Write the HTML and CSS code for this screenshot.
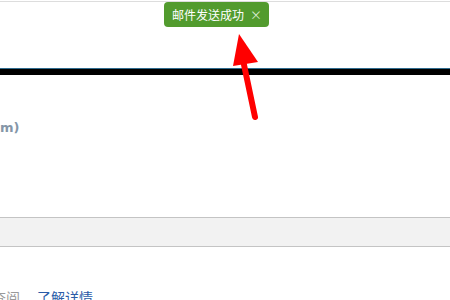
FILE: index.html
```html
<!DOCTYPE html>
<html>
<head>
<meta charset="utf-8">
<link rel="stylesheet" href="styles.css">
</head>
<body>
<div class="page">
  <div class="topline"></div>
  <div class="rule"></div>
  <div class="info">m)</div>
  <div class="band"></div>
  <div class="links"><span class="muted">查阅</span><a class="more">了解详情</a></div>

  <div class="toast"><span class="toast-text">邮件发送成功</span><span class="toast-close">×</span></div>
  <svg class="arrow" width="450" height="300" viewBox="0 0 450 300">
    <line x1="255" y1="117" x2="243" y2="60" stroke="#ff0000" stroke-width="6" stroke-linecap="round"/>
    <polygon points="239,34 233,66 258,62" fill="#ff0000"/>
  </svg>
</div>
</body>
</html>
```
FILE: styles.css
```css
html, body {
  margin: 0;
  padding: 0;
  background: #ffffff;
}
.page {
  position: relative;
  width: 450px;
  height: 300px;
  overflow: hidden;
  font-family: "Noto Sans CJK SC", "Liberation Sans", sans-serif;
}
.topline {
  margin-top: 1px;
  height: 1px;
  background: #dddddd;
}
.rule {
  margin-top: 66px;
  height: 6px;
  border-top: 1px solid #2f6b8e;
  background: #000000;
}
.info {
  margin-top: 45px;
  height: 16px;
  line-height: 16px;
  font-size: 13px;
  font-weight: bold;
  color: #8596a8;
  font-family: "DejaVu Sans", "Liberation Sans", sans-serif;
}
.band {
  margin-top: 81px;
  height: 28px;
  background: #f2f2f2;
  border-top: 1px solid #c4c4c4;
  border-bottom: 1px solid #c4c4c4;
}
.links {
  margin-top: 40px;
  margin-left: -8px;
  height: 20px;
  line-height: 20px;
  font-size: 14px;
  display: flex;
  gap: 17px;
}
.muted {
  color: #9a9a9a;
}
.more {
  color: #2a5ca8;
}
.toast {
  position: absolute;
  left: 164px;
  top: 2px;
  width: 105px;
  height: 25px;
  box-sizing: border-box;
  padding-left: 8px;
  background: #529b2e;
  border-radius: 4px;
  display: flex;
  align-items: center;
  color: #ffffff;
  font-size: 12px;
}
.toast-close {
  margin-left: 6px;
  font-size: 12px;
  color: #d8ecd0;
}
.arrow {
  position: absolute;
  left: 0;
  top: 0;
}
```
